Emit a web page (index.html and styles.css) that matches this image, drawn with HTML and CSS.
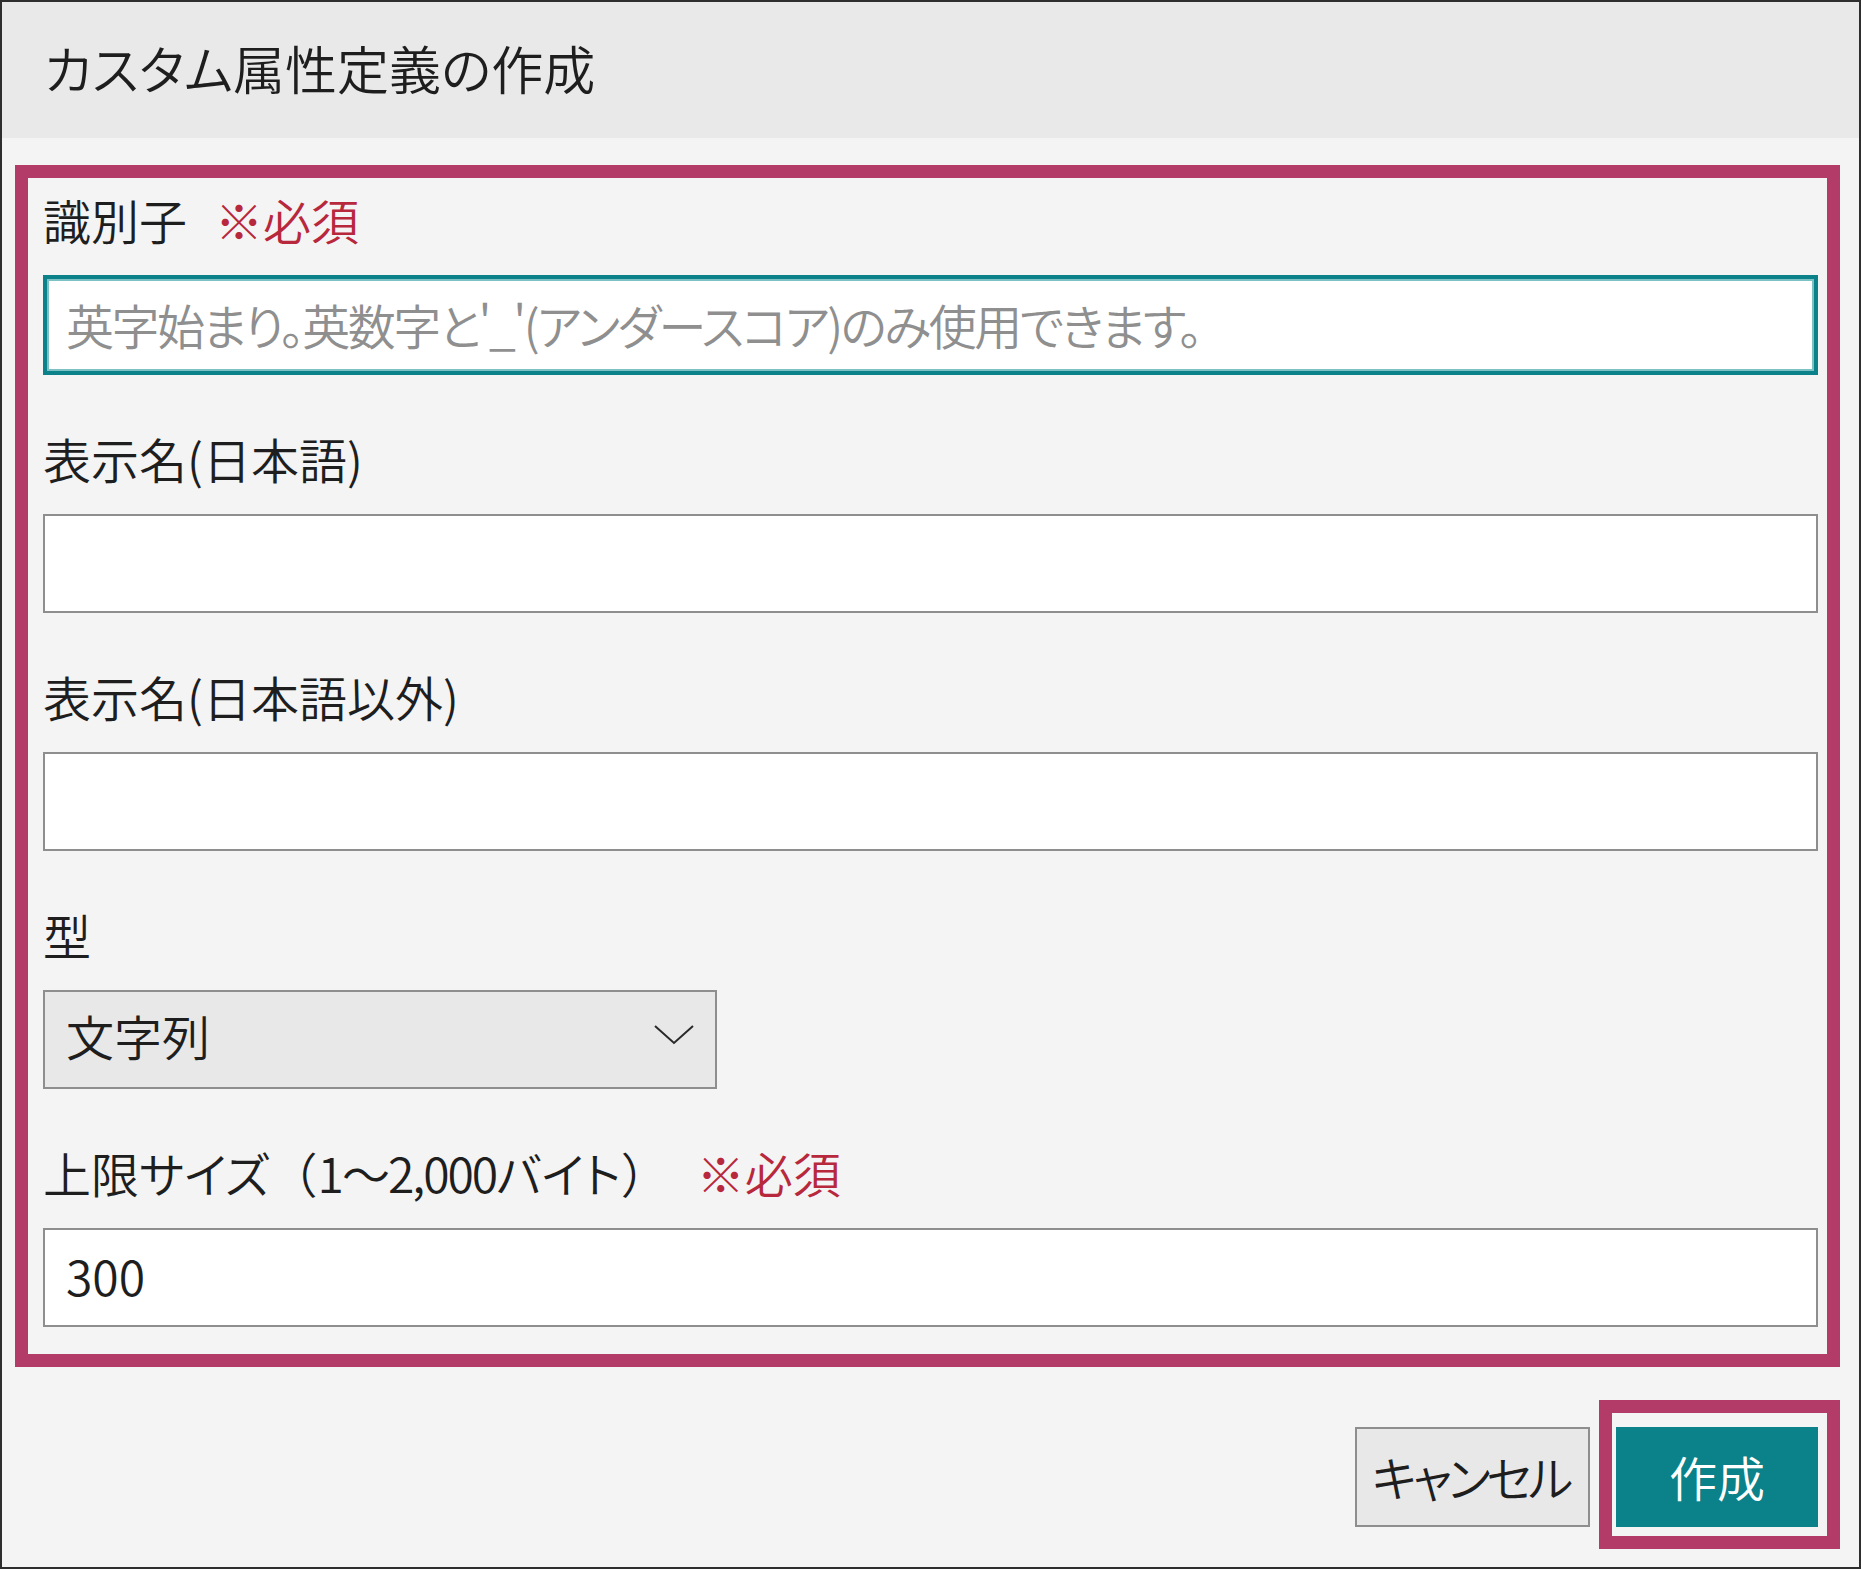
FILE: index.html
```html
<!DOCTYPE html>
<html lang="ja">
  <head>
    <meta charset="UTF-8" />
    <meta name="viewport" content="width=device-width, initial-scale=1.0" />
    <title>カスタム属性定義の作成</title>
    <link rel="stylesheet" href="styles.css">
  </head>
  <body>
    <div class="dialog">
      <div class="dialog-header">
        <h1>カスタム属性定義の作成</h1>
      </div>

      <form class="form-area">
        <div class="field">
          <label class="field-label" for="attr-id">識別子<span class="required">※必須</span></label>
          <input class="text-input is-focused" id="attr-id" type="text" placeholder="英字始まり。英数字と'_'(アンダースコア)のみ使用できます。">
        </div>

        <div class="field">
          <label class="field-label" for="name-ja">表示名(日本語)</label>
          <input class="text-input" id="name-ja" type="text">
        </div>

        <div class="field">
          <label class="field-label" for="name-other">表示名(日本語以外)</label>
          <input class="text-input" id="name-other" type="text">
        </div>

        <div class="field">
          <label class="field-label" for="attr-type">型</label>
          <div class="select-wrap">
            <select class="select" id="attr-type">
              <option>文字列</option>
            </select>
            <svg class="chevron" width="40" height="20" viewBox="0 0 40 20">
              <path d="M1 1 L20 18 L39 1" fill="none" stroke="#2a2a2a" stroke-width="2" />
            </svg>
          </div>
        </div>

        <div class="field">
          <label class="field-label" for="max-size">上限サイズ<span class="fw">（</span><span class="num">1～2,000</span>バイト<span class="fw">）</span><span class="required">※必須</span></label>
          <input class="text-input" id="max-size" type="text" value="300">
        </div>
      </form>

      <div class="dialog-footer">
        <button class="btn btn-cancel" type="button">キャンセル</button>
        <div class="highlight">
          <button class="btn btn-primary" type="button">作成</button>
        </div>
      </div>
    </div>
  </body>
</html>
```

FILE: styles.css
```css
body {
  margin: 0;
  font-family: "Noto Sans CJK JP", "Noto Sans", sans-serif;
  font-feature-settings: "palt";
  font-weight: 350;
  color: #1e1e1e;
}

.dialog {
  width: 1861px;
  height: 1569px;
  box-sizing: border-box;
  border: 2px solid #2e2e2e;
  background: #f4f4f4;
  display: flex;
  flex-direction: column;
}

.dialog-header {
  height: 136px;
  box-sizing: border-box;
  padding: 0 0 5px 42px;
  background: #e9e9e9;
  display: flex;
  align-items: center;
}

.dialog-header h1 {
  margin: 0;
  font-size: 52px;
  font-weight: 350;
  line-height: 1;
}

.form-area {
  margin: 27px 19px 0 13px;
  border: 13px solid #b23b67;
  padding: 5px 9px 27px 15px;
}

.field + .field {
  margin-top: 47px;
}

.field-label {
  display: block;
  height: 72px;
  margin-bottom: 20px;
  font-size: 48px;
  line-height: 72px;
  white-space: nowrap;
}

.fw {
  font-feature-settings: normal;
}

.num {
  letter-spacing: -2px;
}

.required {
  color: #b8283c;
  margin-left: 28px;
}

.text-input {
  display: block;
  width: 100%;
  height: 99px;
  box-sizing: border-box;
  border: 2px solid #8e8e8e;
  background: #fff;
  padding: 0 21px 5px;
  font: inherit;
  font-size: 48px;
  color: #1e1e1e;
  outline: none;
}

.text-input::placeholder {
  color: #8f8f8f;
  letter-spacing: -2.5px;
}

.text-input.is-focused {
  height: 100px;
  border: 4px solid #0b8189;
  box-shadow: inset 0 0 0 2px #7cc2c4;
  padding: 0 19px 3px;
}

.select-wrap {
  position: relative;
  width: 674px;
}

.select {
  display: block;
  width: 100%;
  height: 99px;
  box-sizing: border-box;
  appearance: none;
  border: 2px solid #8e8e8e;
  border-radius: 0;
  background: #e8e8e8;
  padding: 0 21px 10px;
  font: inherit;
  font-size: 48px;
  color: #1e1e1e;
  outline: none;
}

.chevron {
  position: absolute;
  right: 23px;
  top: 35px;
  pointer-events: none;
}

.dialog-footer {
  display: flex;
  justify-content: flex-end;
  align-items: flex-start;
  gap: 9px;
  margin-top: 33px;
  padding-right: 19px;
}

.btn {
  height: 100px;
  box-sizing: border-box;
  padding: 0 0 3px;
  font: inherit;
  font-size: 48px;
  cursor: pointer;
}

.btn-cancel {
  width: 235px;
  margin-top: 27px;
  background: #e8e8e8;
  border: 2px solid #8e8e8e;
  color: #1e1e1e;
  letter-spacing: -4px;
  text-indent: -4px;
}

.highlight {
  border: 13px solid #b23b67;
  padding: 14px 9px 9px 4px;
}

.btn-primary {
  display: block;
  width: 202px;
  background: #0b8189;
  border: 0;
  color: #fff;
}
```
